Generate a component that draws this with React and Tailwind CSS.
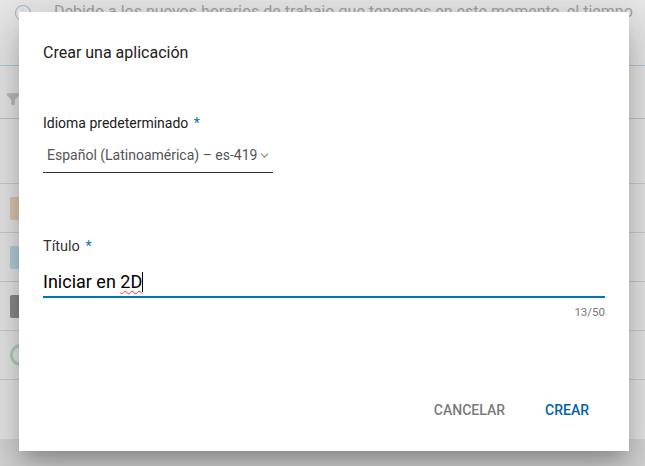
import { ChevronDown, Info, Filter } from "lucide-react";

const rows = [
  { color: "bg-[#f6dcc2]" },
  { color: "bg-[#c4e6f2]" },
  { color: "bg-[#9a9a9a]" },
  { color: "bg-white", ring: true },
];

const Background = () => (
  <div className="flex h-full flex-col bg-white">
    {/* banner */}
    <div className="flex h-[66px] items-start gap-[22px] border-b border-[#c9dcee] px-[14px] pt-[1px]">
      <Info size={18} strokeWidth={1.5} className="mt-[3px] shrink-0 text-[#b3cde8]" />
      <div className="whitespace-nowrap text-[16px] leading-[22px] text-[#b4b4b4]">
        Debido a los nuevos horarios de trabajo que tenemos en este momento, el tiempo
      </div>
    </div>
    {/* filter row */}
    <div className="flex h-[53px] items-center border-b border-[#d8d8d8] px-[6px] pt-[14px]">
      <Filter size={14} className="fill-[#d0d0d0] text-[#d0d0d0]" />
    </div>
    <div className="h-[65px] border-b border-[#e2e2e2]" />
    {rows.map((r, i) => (
      <div key={i} className="flex h-[49px] items-center border-b border-[#e2e2e2] px-[10px]">
        {r.ring ? (
          <div className="h-[22px] w-[22px] rounded-full border-[3px] border-[#c2e8cd]" />
        ) : (
          <div className={`h-[23px] w-[24px] rounded-[2px] ${r.color}`} />
        )}
      </div>
    ))}
    <div className="h-[59px]" />
    <div className="flex-1 bg-[#ececec]" />
  </div>
);

export default function App() {
  return (
    <div
      className="relative h-[466px] w-[645px] overflow-hidden"
      style={{ fontFamily: "Roboto, 'Liberation Sans', sans-serif" }}
    >
      <Background />
      <div className="absolute inset-0 bg-black/[0.09]" />

      {/* dialog */}
      <div className="absolute left-[19px] top-[12px] flex h-[439px] w-[610px] flex-col bg-white px-[24px] shadow-[0_11px_15px_-7px_rgba(0,0,0,0.2),0_24px_38px_3px_rgba(0,0,0,0.14),0_9px_46px_8px_rgba(0,0,0,0.12)]">
        <h2 className="pt-[29px] text-[16px] leading-[24px] text-[#212121]">Crear una aplicación</h2>

        <label className="mt-[48px] text-[14px] leading-[20px] text-[#212121]">
          Idioma predeterminado <span className="ml-[2px] text-[#0a73b7]">*</span>
        </label>
        <div className="mt-[12px] flex w-[230px] items-center border-b border-[#333] pb-[7px] pl-[4px]">
          <span className="whitespace-nowrap text-[14px] leading-[20px] text-[#555]">
            Español (Latinoamérica) – es-419
          </span>
          <ChevronDown size={13} strokeWidth={2} className="ml-[1px] mt-[1px] text-[#888]" />
        </div>

        <label className="mt-[64px] text-[14.5px] leading-[20px] text-[#333]">
          Título <span className="ml-[2px] text-[#0a73b7]">*</span>
        </label>
        <div className="mt-[14px] flex items-end border-b-2 border-[#0073bb] pb-[3px]">
          <span className="text-[18px] leading-[22px] text-black">
            Iniciar en{" "}
            <span className="underline decoration-wavy decoration-[#e53935] decoration-1 underline-offset-2">2D</span>
          </span>
          <span className="mb-[1px] h-[20px] w-px bg-black" />
        </div>
        <div className="mt-[7px] text-right text-[11.5px] leading-[14px] text-[#777]">13/50</div>

        <div className="mt-auto mb-[31px] flex justify-end gap-[40px] pr-[16px]">
          <button className="text-[14px] font-medium leading-[20px] text-[#7a7a7a]">CANCELAR</button>
          <button className="text-[14px] font-medium leading-[20px] text-[#0062a8]">CREAR</button>
        </div>
      </div>
    </div>
  );
}
